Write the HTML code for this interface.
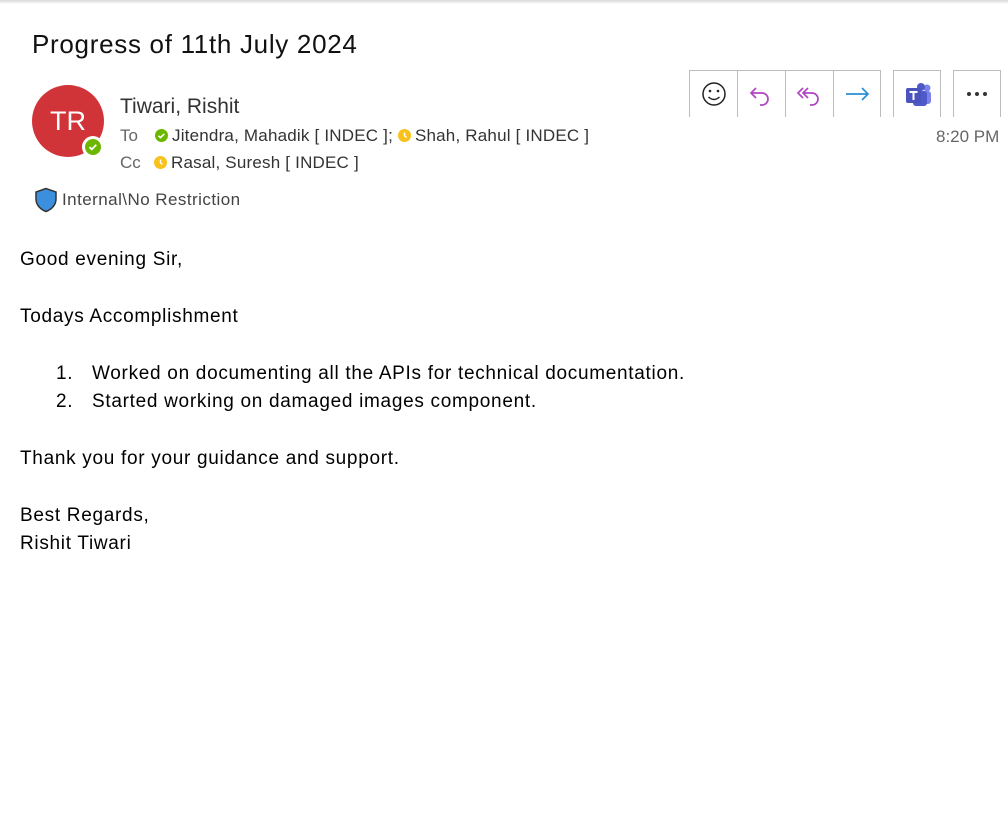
<!DOCTYPE html>
<html><head><style>
body{margin:0;width:1008px;height:822px;background:#fff;font-family:"Liberation Sans",sans-serif;position:relative;overflow:hidden;color:#000}
.topline{position:absolute;left:0;top:0;width:1008px;height:4px;background:linear-gradient(#d8d8d8,#fff)}
.a{position:absolute;white-space:nowrap}
.btn{position:absolute;top:70px;height:47px;border:1px solid #bdbdbd;border-bottom:none;box-sizing:border-box}
.dot{display:inline-block;width:13px;height:13px;border-radius:50%;vertical-align:-1px;margin-right:4px;position:relative}
.body{font-size:19px;color:#000;letter-spacing:0.7px}
</style></head><body>
<div class="topline"></div>
<div class="a" style="left:32px;top:29px;font-size:26px;color:#111;letter-spacing:0.7px">Progress of 11th July 2024</div>
<div class="a" style="left:32px;top:85px;width:72px;height:72px;border-radius:50%;background:#d13438;color:#fff;font-size:27px;line-height:72px;text-align:center">TR</div>
<div class="a" style="left:82px;top:136px;width:22px;height:22px;border-radius:50%;background:#fff"></div>
<div class="a" style="left:85px;top:139px;width:16px;height:16px;border-radius:50%;background:#6bb700">
<svg width="16" height="16"><path d="M4.5 8.2l2.3 2.2 4.5-4.6" stroke="#fff" stroke-width="1.8" fill="none"/></svg></div>
<div class="a" style="left:120px;top:95px;font-size:21px;color:#333">Tiwari, Rishit</div>
<div class="a" style="left:120px;top:126px;font-size:17px;color:#666">To</div>
<div class="a" style="left:155px;top:126px;font-size:17px;color:#333;letter-spacing:0.2px"><span class="dot" style="background:#6bb700"><svg width="13" height="13" style="position:absolute;left:0;top:0"><path d="M3.5 6.8l2 1.8 3.8-3.8" stroke="#fff" stroke-width="1.6" fill="none"/></svg></span>Jitendra, Mahadik [ INDEC ]; <span class="dot" style="background:#f8c21a"><svg width="13" height="13" style="position:absolute;left:0;top:0"><path d="M6.5 3.5v3.3l2 1.6" stroke="#fff" stroke-width="1.5" fill="none"/></svg></span>Shah, Rahul [ INDEC ]</div>
<div class="a" style="left:120px;top:153px;font-size:17px;color:#666">Cc</div>
<div class="a" style="left:154px;top:153px;font-size:17px;color:#333;letter-spacing:0.2px"><span class="dot" style="background:#f8c21a"><svg width="13" height="13" style="position:absolute;left:0;top:0"><path d="M6.5 3.5v3.3l2 1.6" stroke="#fff" stroke-width="1.5" fill="none"/></svg></span>Rasal, Suresh [ INDEC ]</div>
<svg class="a" style="left:34px;top:187px" width="24" height="26"><path d="M12 1.5L2 5v7c0 6 4.5 10.5 10 12.5 5.5-2 10-6.5 10-12.5V5z" fill="#3c8fdc" stroke="#333" stroke-width="1.5"/></svg>
<div class="a" style="left:62px;top:190px;font-size:17px;color:#444;letter-spacing:0.45px">Internal\No Restriction</div>

<div class="btn" style="left:689px;width:49px"><svg width="48" height="46"><circle cx="24" cy="23" r="11" fill="none" stroke="#222" stroke-width="1.5"/><circle cx="20" cy="20" r="1.3" fill="#222"/><circle cx="28" cy="20" r="1.3" fill="#222"/><path d="M18.5 26q5.5 5 11 0" stroke="#222" stroke-width="1.5" fill="none"/></svg></div>
<div class="btn" style="left:737px;width:49px"><svg width="48" height="46"><path d="M18 17l-5 5 5 5M13 22h11a6 6 0 0 1 0 12h-2" stroke="#b146c2" stroke-width="1.7" fill="none"/></svg></div>
<div class="btn" style="left:785px;width:49px"><svg width="48" height="46"><path d="M17 17l-5 5 5 5M22 17l-5 5 5 5M17 22h9a6 6 0 0 1 0 12h-2" stroke="#b146c2" stroke-width="1.7" fill="none"/></svg></div>
<div class="btn" style="left:833px;width:48px"><svg width="48" height="46"><path d="M12 23h22M28 17l6 6-6 6" stroke="#2a8fd4" stroke-width="1.7" fill="none"/></svg></div>
<div class="btn" style="left:893px;width:48px"><svg width="48" height="46"><circle cx="33" cy="17" r="3.5" fill="#7b83eb"/><rect x="24" y="20" width="13" height="13" rx="3" fill="#7b83eb"/><circle cx="27" cy="16" r="4" fill="#5059c9"/><rect x="19" y="20" width="14" height="15" rx="3" fill="#5059c9"/><rect x="12" y="17" width="15" height="15" rx="2" fill="#4b53bc"/><path d="M15.5 21h8M19.5 21v8" stroke="#fff" stroke-width="2"/></svg></div>
<div class="btn" style="left:953px;width:48px"><svg width="48" height="46"><circle cx="15" cy="23" r="2" fill="#333"/><circle cx="23" cy="23" r="2" fill="#333"/><circle cx="31" cy="23" r="2" fill="#333"/></svg></div>
<div class="a" style="left:936px;top:127px;font-size:17px;color:#666">8:20 PM</div>

<div class="a body" style="left:20px;top:249px">Good evening Sir,</div>
<div class="a body" style="left:20px;top:306px">Todays Accomplishment</div>
<div class="a body" style="left:56px;top:363px">1.</div>
<div class="a body" style="left:92px;top:363px">Worked on documenting all the APIs for technical documentation.</div>
<div class="a body" style="left:56px;top:391px">2.</div>
<div class="a body" style="left:92px;top:391px">Started working on damaged images component.</div>
<div class="a body" style="left:20px;top:448px">Thank you for your guidance and support.</div>
<div class="a body" style="left:20px;top:505px">Best Regards,</div>
<div class="a body" style="left:20px;top:533px">Rishit Tiwari</div>
</body></html>
